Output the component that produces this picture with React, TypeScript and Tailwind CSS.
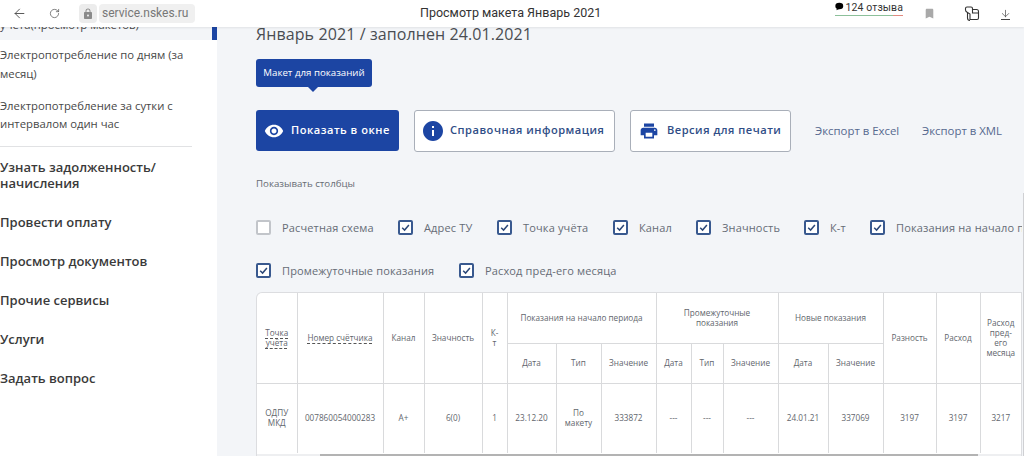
import { ArrowDown, ArrowLeft, RotateCw } from "lucide-react";
import { MdBookmark, MdInfo, MdLock, MdPrint, MdVisibility } from "react-icons/md";

const openSans = { fontFamily: '"Open Sans", sans-serif' };

const menu = ["Провести оплату", "Просмотр документов", "Прочие сервисы", "Услуги", "Задать вопрос"];

const columnsRow1 = [
  { label: "Расчетная схема", width: "w-[142px]", checked: false },
  { label: "Адрес ТУ", width: "w-[99px]", checked: true },
  { label: "Точка учёта", width: "w-[116px]", checked: true },
  { label: "Канал", width: "w-[83px]", checked: true },
  { label: "Значность", width: "w-[108px]", checked: true },
  { label: "К-т", width: "w-[66px]", checked: true },
  { label: "Показания на начало периода", width: "w-[230px]", checked: true },
];

const columnsRow2 = [
  { label: "Промежуточные показания", width: "w-[203px]", checked: true },
  { label: "Расход пред-его месяца", width: "w-[200px]", checked: true },
];

const colWidths = [40, 86, 41, 58, 25, 49, 45, 55, 35, 32, 55, 50, 55, 53, 44, 41];

const rowValues = ["ОДПУ МКД", "007860054000283", "А+", "6(0)", "1", "23.12.20", "По макету", "333872", "---", "---", "---", "24.01.21", "337069", "3197", "3197", "3217"];

function Check({ label, width, checked }: { label: string; width: string; checked: boolean }) {
  return (
    <div className={`flex items-center shrink-0 ${width}`}>
      <span
        className={`flex items-center justify-center w-[15px] h-[15px] rounded-[2px] border-2 bg-white shrink-0 ${
          checked ? "border-[#39598f]" : "border-[#c2c5ca]"
        }`}
      >
        {checked && (
          <svg viewBox="0 0 12 12" className="w-[11px] h-[11px]" fill="none" stroke="#2b4778" strokeWidth="1.6">
            <path d="M2.4 6.3 L5 8.8 L9.7 3.2" />
          </svg>
        )}
      </span>
      <span className="ml-[11px] text-[11px] leading-none text-[#666c76] whitespace-nowrap tracking-[0.15px]">{label}</span>
    </div>
  );
}

function Th({ children, colSpan, rowSpan, className = "" }: { children: React.ReactNode; colSpan?: number; rowSpan?: number; className?: string }) {
  return (
    <th
      colSpan={colSpan}
      rowSpan={rowSpan}
      className={`border border-[#d9dadc] text-[8.2px] leading-[10px] font-normal text-[#62666d] text-center align-middle ${className}`}
    >
      {children}
    </th>
  );
}

export default function App() {
  return (
    <div className="w-[1024px] h-[456px] flex flex-col overflow-hidden bg-white" style={openSans}>
      {/* browser bar */}
      <header
        className="relative z-10 h-[27px] shrink-0 flex items-center bg-white shadow-[0_1px_2px_rgba(0,0,0,0.08)]"
        style={{ fontFamily: "Roboto, sans-serif" }}
      >
        <ArrowLeft className="ml-[12px] w-[15px] h-[15px] text-[#444]" strokeWidth={1.4} />
        <RotateCw className="ml-[22px] w-[11px] h-[11px] text-[#555]" strokeWidth={1.6} />
        <div className="ml-[19px] w-[18px] h-[19px] rounded-[4px] bg-[#ececec] flex items-center justify-center">
          <MdLock className="w-[12px] h-[12px] text-[#8a8a8a]" />
        </div>
        <div className="ml-[2px] h-[19px] px-[3px] w-[96px] rounded-[4px] bg-[#f0f0f0] text-[12px] leading-[19px] text-[#777] whitespace-nowrap">
          service.nskes.ru
        </div>
        <div className="ml-[225px] w-[181px] text-[12.5px] text-[#333] whitespace-nowrap">Просмотр макета Январь 2021</div>
        <div className="ml-[234px] self-start mt-[2px] w-[68px] flex items-start h-[14px] border-b border-[#8cc09a] relative">
          <svg viewBox="0 0 10 9" className="w-[10px] h-[9px] mr-[2px]">
            <ellipse cx="5" cy="4" rx="4.6" ry="3.8" fill="#000" />
            <path d="M2.5 6.5 L1.5 9 L5 7.5 Z" fill="#000" />
          </svg>
          <span className="text-[10.5px] leading-[11px] text-[#333] whitespace-nowrap tracking-[0.1px]">124 отзыва</span>
          <span className="absolute right-0 -bottom-px w-[10px] h-px bg-[#e08a80]" />
        </div>
        <MdBookmark className="ml-[20px] w-[13px] h-[13px] text-[#a9a9a9]" />
        <svg viewBox="0 0 16 16" className="ml-[28px] w-[16px] h-[16px]" fill="none" stroke="#333" strokeWidth="1.1">
          <path d="M1.5 2.5 Q1.5 1 3 1 H7 Q8.5 1 8.5 2.5 V3.5 H12.5 Q14.5 3.5 14.5 5.5 V12 Q14.5 13.5 13 13.5 H6 V8 L3.5 6.5 Q1.5 5.5 1.5 4 Z" />
          <path d="M3.5 6.5 V12 Q3.5 14.5 6 14.5 M8.5 3.5 V7 H14.5" />
        </svg>
        <div className="ml-[20px] flex flex-col items-center">
          <ArrowDown className="w-[11px] h-[11px] text-[#444]" strokeWidth={1.5} />
          <span className="w-[9px] h-px bg-[#444]" />
        </div>
      </header>

      <div className="flex flex-1 min-h-0">
        {/* sidebar */}
        <aside className="w-[217px] shrink-0 overflow-hidden bg-white text-[#484848]">
          <div className="h-[13px] flex bg-[#f3f5f8]">
            <div className="flex-1 overflow-hidden text-[11.3px] leading-[18px] -mt-[11px] whitespace-nowrap">учёта(просмотр макетов)</div>
            <div className="w-[5px] bg-[#1c45a3]" />
          </div>
          <div className="mt-[6px] pr-[25px] text-[11.3px] leading-[18.5px]">Электропотребление по дням (за месяц)</div>
          <div className="mt-[14px] pr-[25px] text-[11.3px] leading-[18px]">Электропотребление за сутки с интервалом один час</div>
          <div className="mt-[13px] w-[192px] h-px bg-[#e1e2e4]" />
          <div className="mt-[13px] w-[170px] text-[13px] leading-[15.5px] font-semibold text-[#3a3a3a]">Узнать задолженность/ начисления</div>
          <div className="mt-[22px] flex flex-col gap-[20px]">
            {menu.map((m) => (
              <div key={m} className="text-[13px] leading-[19px] font-semibold text-[#3a3a3a]">
                {m}
              </div>
            ))}
          </div>
        </aside>

        {/* main */}
        <main className="relative flex-1 min-w-0 bg-[#f3f5f8] pl-[39px] pr-[2px] overflow-hidden">
          <h1 className="h-[14px] text-[16px] leading-[14px] font-normal text-[#4a4d52] whitespace-nowrap tracking-[0.1px]">
            Январь 2021 / заполнен 24.01.2021
          </h1>

          <div className="relative mt-[18px] w-[116px] h-[28px] rounded-[3px] bg-[#1c45a3] flex items-center justify-center text-[9.7px] text-white whitespace-nowrap">
            Макет для показаний
            <span className="absolute left-[52px] -bottom-[5px] w-0 h-0 border-x-[5px] border-x-transparent border-t-[5px] border-t-[#1c45a3]" />
          </div>

          <div className="mt-[23px] flex items-center h-[41px]">
            <button className="w-[143px] h-[41px] rounded-[3px] bg-[#1c45a3] flex items-center pl-[8px] text-white text-[11.1px] font-semibold tracking-[0.5px] whitespace-nowrap">
              <MdVisibility className="w-[20px] h-[20px] mr-[7px]" />
              Показать в окне
            </button>
            <button className="ml-[15px] w-[201px] h-[42px] rounded-[3px] border border-[#a9afb9] bg-white flex items-center pl-[6px] text-[#2f4d86] text-[11.1px] font-semibold tracking-[0.5px] whitespace-nowrap">
              <MdInfo className="w-[24px] h-[24px] mr-[5px] text-[#1c45a3]" />
              Справочная информация
            </button>
            <button className="ml-[15px] w-[161px] h-[42px] rounded-[3px] border border-[#a9afb9] bg-white flex items-center pl-[8px] text-[#2f4d86] text-[11.1px] font-semibold tracking-[0.5px] whitespace-nowrap">
              <MdPrint className="w-[20px] h-[20px] mr-[8px] text-[#1c45a3]" />
              Версия для печати
            </button>
            <span className="ml-[24px] w-[107px] text-[11.4px] text-[#56698f] whitespace-nowrap">Экспорт в Excel</span>
            <span className="text-[11.4px] text-[#56698f] whitespace-nowrap">Экспорт в XML</span>
          </div>

          <div className="mt-[27px] h-[12px] text-[9.7px] leading-[12px] text-[#666b73]">Показывать столбцы</div>

          <div className="mt-[29px] flex overflow-hidden h-[16px]">
            {columnsRow1.map((c) => (
              <Check key={c.label} {...c} />
            ))}
          </div>
          <div className="mt-[27px] flex h-[16px]">
            {columnsRow2.map((c) => (
              <Check key={c.label} {...c} />
            ))}
          </div>

          <div className="mt-[14px] w-[766px] h-[165px] rounded-tl-[6px] bg-white border border-b-0 border-[#dcdde0] overflow-hidden">
            <div className="h-[161px] overflow-hidden">
              <table className="table-fixed border-collapse w-[764px]">
                <colgroup>
                  {colWidths.map((w, i) => (
                    <col key={i} style={{ width: w }} />
                  ))}
                </colgroup>
                <thead>
                  <tr className="h-[50px]">
                    <Th rowSpan={2} className="border-l-0 border-t-0 px-[2px]">
                      <span className="underline decoration-dashed decoration-[#555] underline-offset-2">Точка учёта</span>
                    </Th>
                    <Th rowSpan={2} className="border-t-0 px-[2px]">
                      <span className="underline decoration-dashed decoration-[#555] underline-offset-2">Номер счётчика</span>
                    </Th>
                    <Th rowSpan={2} className="border-t-0">Канал</Th>
                    <Th rowSpan={2} className="border-t-0">Значность</Th>
                    <Th rowSpan={2} className="border-t-0">
                      К-
                      <br />т
                    </Th>
                    <Th colSpan={3} className="border-t-0">Показания на начало периода</Th>
                    <Th colSpan={3} className="border-t-0 px-[14px]">Промежуточные показания</Th>
                    <Th colSpan={2} className="border-t-0">Новые показания</Th>
                    <Th rowSpan={2} className="border-t-0">Разность</Th>
                    <Th rowSpan={2} className="border-t-0">Расход</Th>
                    <Th rowSpan={2} className="border-t-0 border-r-0 px-[4px]">Расход пред-его месяца</Th>
                  </tr>
                  <tr className="h-[40px]">
                    <Th>Дата</Th>
                    <Th>Тип</Th>
                    <Th>Значение</Th>
                    <Th>Дата</Th>
                    <Th>Тип</Th>
                    <Th>Значение</Th>
                    <Th>Дата</Th>
                    <Th>Значение</Th>
                  </tr>
                </thead>
                <tbody>
                  <tr className="h-[70px]">
                    {rowValues.map((v, i) => (
                      <td
                        key={i}
                        className="border border-[#d9dadc] border-b-0 first:border-l-0 last:border-r-0 px-[6px] text-[8.2px] leading-[10.5px] text-[#62666d] text-center align-middle"
                      >
                        {v}
                      </td>
                    ))}
                  </tr>
                </tbody>
              </table>
            </div>
            <div className="h-[3px] bg-[#eeeff1]">
              <div className="ml-[63px] w-[658px] h-[3px] bg-[#b3b3b3]" />
            </div>
          </div>

          {/* page scrollbar edge */}
          <div className="absolute right-0 top-[166px] bottom-0 w-px bg-[#cfd0d3]" />
        </main>
      </div>
    </div>
  );
}
